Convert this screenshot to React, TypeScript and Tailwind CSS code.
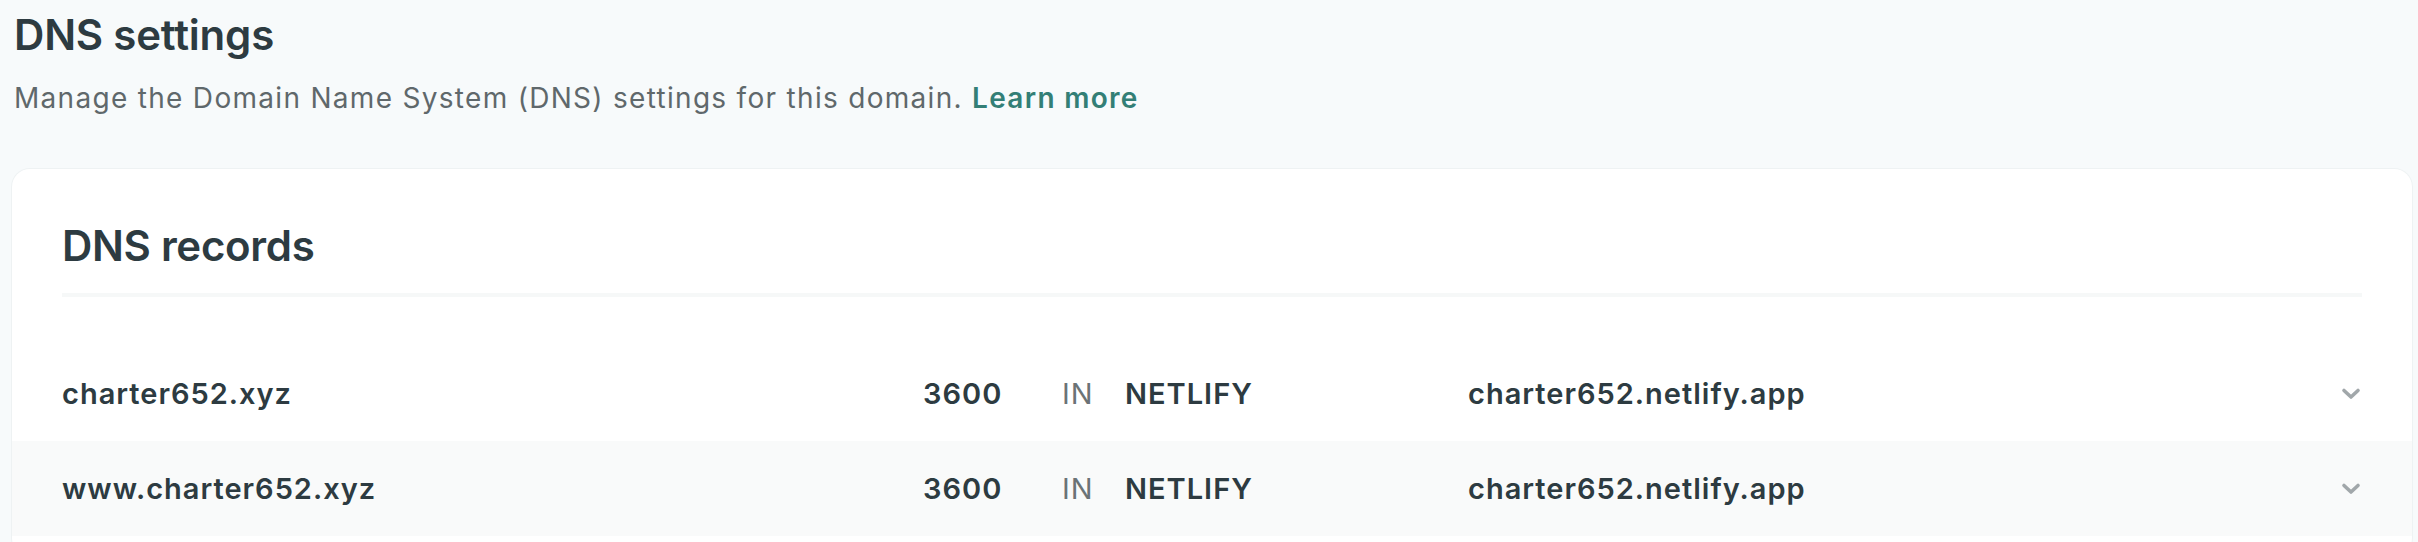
import React from 'react';

interface IRecord {
    name: string;
    ttl: string;
    type: string;
    value: string;
}

const records: IRecord[] = [
    { name: 'charter652.xyz', ttl: '3600', type: 'NETLIFY', value: 'charter652.netlify.app' },
    { name: 'www.charter652.xyz', ttl: '3600', type: 'NETLIFY', value: 'charter652.netlify.app' },
];

function Chevron() {
    return (
        <svg width="20" height="14" viewBox="0 0 20 14" fill="none">
            <path d="M3 3.5 L10 10 L17 3.5" stroke="#a1a7aa" strokeWidth="3.6" strokeLinecap="round" strokeLinejoin="round" />
        </svg>
    );
}

export default function App() {
    return (
        <div className="min-h-screen bg-[#f7fafb] pl-[12px] pr-[6px] text-[#2d3b41]" style={{ fontFamily: 'Inter, "Noto Sans", sans-serif' }}>
            <div className="pl-[2px] pt-[10px]">
                <h1 className="text-[42px] leading-[50px] font-semibold tracking-[-0.2px]">DNS settings</h1>
                <p className="mt-[20px] text-[28px] leading-[36px] tracking-[1.3px] text-[#5f686b]">
                    Manage the Domain Name System (DNS) settings for this domain.{' '}
                    <a className="font-semibold text-[#337f76]">Learn more</a>
                </p>
            </div>

            <div className="mt-[53px] bg-white rounded-[18px] shadow-[0_0_0_1px_#eef2f3] overflow-hidden pb-[20px]">
                <div className="px-[50px] pt-[51px]">
                    <h2 className="text-[42px] leading-[52px] font-semibold tracking-[-0.3px]">DNS records</h2>
                    <div className="mt-[21px] h-[4px] bg-[#f6f8f8]" />
                </div>

                <div className="mt-[49px]">
                    {records.map((r, i) => (
                        <div
                            key={i}
                            className={`grid grid-cols-[861px_139px_63px_343px_1fr_auto] items-center h-[95px] px-[50px] text-[29px] leading-[34px] tracking-[1px] ${i % 2 === 1 ? 'bg-[#f9fafa]' : 'bg-white'}`}
                        >
                            <span className="font-semibold">{r.name}</span>
                            <span className="font-semibold">{r.ttl}</span>
                            <span className="text-[#6b7376]">IN</span>
                            <span className="font-semibold">{r.type}</span>
                            <span className="font-semibold">{r.value}</span>
                            <span className="flex items-center pr-[1px]"><Chevron /></span>
                        </div>
                    ))}
                </div>
            </div>
        </div>
    );
}
